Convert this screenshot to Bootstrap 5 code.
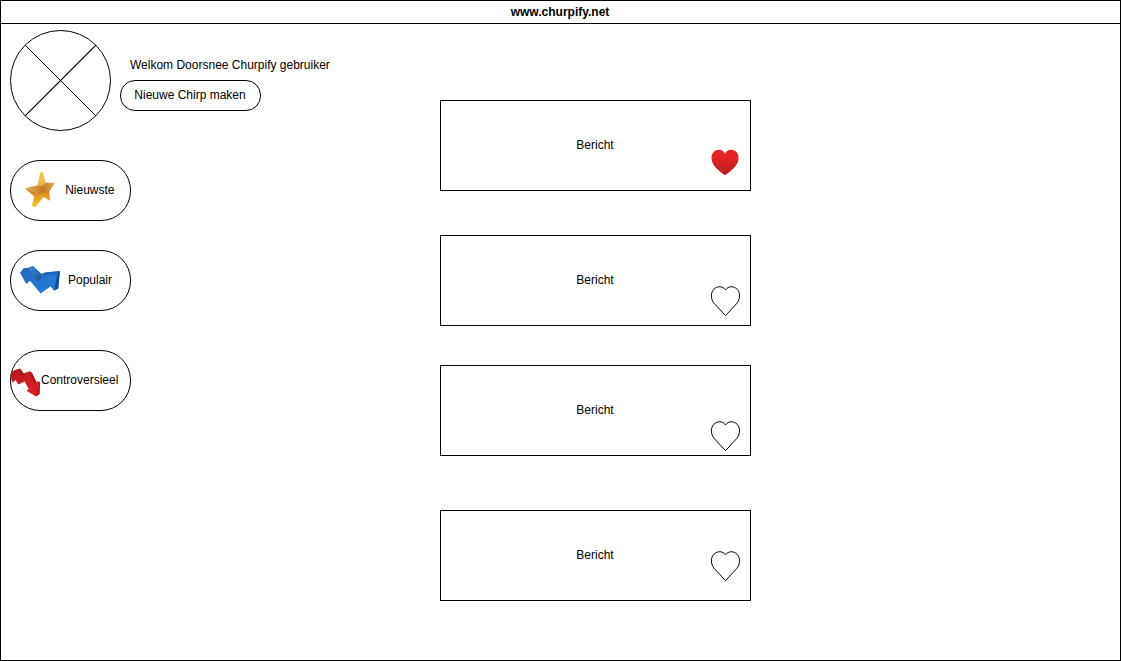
<!DOCTYPE html>
<html lang="nl">
<head>
<meta charset="utf-8">
<meta name="viewport" content="width=device-width, initial-scale=1">
<title>Churpify</title>
<link href="https://cdn.jsdelivr.net/npm/bootstrap@5.3.0/dist/css/bootstrap.min.css" rel="stylesheet">
<style>
  body { font: 12px/14px "Liberation Sans", Arial, sans-serif; color: #000; }
  svg { display: block; flex: none; overflow: visible; }
  .page { width: 1121px; height: 661px; border: 1px solid #000; background: #fff; }
  .titlebar { height: 23px; border-bottom: 1px solid #000; padding-right: 1px; }
  .sidebar { width: 439px; padding: 6px 0 0 9px; }
  .profile { height: 101px; margin-bottom: 29px; }
  .profile-text { padding: 28px 0 0 9px; }
  .welcome { margin: 0 0 8px 10px; }
  .pill { border: 1px solid #000; background: #fff; color: #000; padding: 0; font-size: 12px; line-height: 14px; }
  .pill span { padding-bottom: 2px; }
  .pill-new { width: 141px; height: 31px; border-radius: 15px; padding-right: 1px; }
  .pill-filter { width: 121px; height: 61px; border-radius: 30px; margin-bottom: 29px; }
  .pill-filter.last { margin-top: 39px; }
  .feed { padding-top: 76px; }
  .post { width: 311px; height: 91px; border: 1px solid #000; position: relative; padding: 0 1px 1px 0; }
  .like { position: absolute; right: 10px; }
</style>
</head>
<body>
<div class="page">
  <header class="titlebar d-flex align-items-center justify-content-center fw-bold">www.churpify.net</header>
  <div class="d-flex">
    <aside class="sidebar flex-shrink-0">
      <div class="profile d-flex">
        <svg width="101" height="101" viewBox="0 0 101 101" fill="none" stroke="#000"><circle cx="50.5" cy="50.5" r="50"/><path d="M15.1 15.1 85.9 85.9"/><path stroke-width="1.2" d="M85.9 15.1 15.1 85.9"/></svg>
        <div class="profile-text">
          <p class="welcome">Welkom Doorsnee Churpify gebruiker</p>
          <button class="pill pill-new d-flex align-items-center justify-content-center"><span>Nieuwe Chirp maken</span></button>
        </div>
      </div>
      <nav>
        <button class="pill pill-filter d-flex align-items-center">
          <svg width="54.2" height="59" viewBox="11 161 54.2 59" preserveAspectRatio="xMinYMin">
            <defs>
              <linearGradient id="gold" x1="0" y1="0" x2="0" y2="1"><stop offset="0" stop-color="#f4c936"/><stop offset=".3" stop-color="#eebc55"/><stop offset=".5" stop-color="#cb7d25"/><stop offset=".75" stop-color="#e5a51f"/><stop offset="1" stop-color="#f6ca24"/></linearGradient>
              <linearGradient id="amber" x1="0" y1="0" x2="1" y2="0"><stop offset="0" stop-color="#eabb60"/><stop offset="1" stop-color="#bd6b1b"/></linearGradient>
              <linearGradient id="tip" x1="0" y1="0" x2="1" y2="0"><stop offset="0" stop-color="#c4772b"/><stop offset="1" stop-color="#e2ad48"/></linearGradient>
            </defs>
            <path fill="url(#gold)" d="M40.5 172 43 172.3 45.7 182.8 54.8 183 49.2 191.5 50.3 201 43.5 197 35 207.3 32 206 34 196.5 25.3 188.4 37.3 185.2Z"/>
            <path fill="url(#amber)" d="M25.3 188.4Q35 188 44 185.5L45 190 40 193.5 32 191.5Z"/>
            <path fill="url(#tip)" d="M43 188 45.7 182.8 54.8 183 49.2 191 44 192Z"/>
          </svg>
          <span>Nieuwste</span>
        </button>
        <button class="pill pill-filter d-flex align-items-center">
          <svg width="57" height="59" viewBox="11 251 57 59">
            <defs>
              <linearGradient id="blue" x1="0" y1="0" x2="1" y2="1"><stop offset="0" stop-color="#2267b8"/><stop offset="1" stop-color="#2482e0"/></linearGradient>
              <linearGradient id="fold" x1="0" y1="0" x2="1" y2="1"><stop offset="0" stop-color="#3b8ad8"/><stop offset="1" stop-color="#164f99"/></linearGradient>
            </defs>
            <path fill="url(#blue)" d="M20 272.7 23.5 268.3 27.5 268 33 266 42.5 275 45.5 273 60 271 58.2 288.5 54 290.8 50.5 286.5 40.7 293.5 30 280.7 26.2 284Z"/>
            <path fill="url(#fold)" d="M28.5 268.2 33 266 43 276.5 37.5 281.5Z"/>
            <path fill="#134f99" d="M57 274 60 271 58.2 288.5 54.5 290.5Z"/>
            <path fill="#1c62b5" d="M40.5 274 46 272.3 60 271 57 274 44 275.3Z"/>
          </svg>
          <span>Populair</span>
        </button>
        <button class="pill pill-filter last d-flex align-items-center">
          <svg width="30" height="59" viewBox="11 351 30 59">
            <defs><linearGradient id="red" x1="0" y1="0" x2="1" y2="1"><stop offset="0" stop-color="#b81a20"/><stop offset="1" stop-color="#de2024"/></linearGradient></defs>
            <path fill="url(#red)" d="M10.3 376 11.5 372 15 370 20 368.4 23.5 373.5 29.7 371.3 32 373 36 381.5 40 381.8 39.5 394 35.8 396.5 26.5 390.7 28.8 389 24.5 381.5 18.5 384.5 15.5 380 12.5 382.8Z"/>
            <path fill="#b1171c" d="M20 368.4 24 373.8 22 377 18.5 371ZM29.7 371.3 32 373 36 381.5 33.5 382.5ZM37.3 390 40 381.8 39.5 394 36 396.3Z"/>
          </svg>
          <span>Controversieel</span>
        </button>
      </nav>
    </aside>
    <main class="feed">
      <article class="post d-flex align-items-center justify-content-center" style="margin-bottom:44px">Bericht
        <svg class="like" style="top:48px" width="30" height="30" viewBox="0 0 30 30"><defs><linearGradient id="heart" x1="0" y1="0" x2="0" y2="1"><stop offset=".3" stop-color="#e52322"/><stop offset="1" stop-color="#b91c1c"/></linearGradient></defs><path fill="url(#heart)" d="M15 26.2C10.7 23 1.5 17.2 1.5 8.9 1.5-.1 12.2-1.8 15 4.8 17.8-1.8 28.6-.1 28.6 8.9 28.6 17.2 19.3 23 15 26.2Z"/></svg>
      </article>
      <article class="post d-flex align-items-center justify-content-center" style="margin-bottom:39px">Bericht
        <svg class="like" style="top:50px" width="30" height="30" viewBox="0 0 30 30"><path id="outline" fill="#fff" stroke="#000" d="M15.5 29.7 4 17.2C.7 12.9.4 7 3.8 3.3 7.3-.3 12.8-.1 15.5 3.9 18.2-.1 23.7-.3 27.2 3.3 30.6 7 30.1 12.9 27 17.2Z"/></svg>
      </article>
      <article class="post d-flex align-items-center justify-content-center" style="margin-bottom:54px">Bericht
        <svg class="like" style="top:55px" width="30" height="30"><use href="#outline"/></svg>
      </article>
      <article class="post d-flex align-items-center justify-content-center">Bericht
        <svg class="like" style="top:40px" width="30" height="30"><use href="#outline"/></svg>
      </article>
    </main>
  </div>
</div>
<script src="https://cdn.jsdelivr.net/npm/bootstrap@5.3.0/dist/js/bootstrap.bundle.min.js"></script>
</body>
</html>
